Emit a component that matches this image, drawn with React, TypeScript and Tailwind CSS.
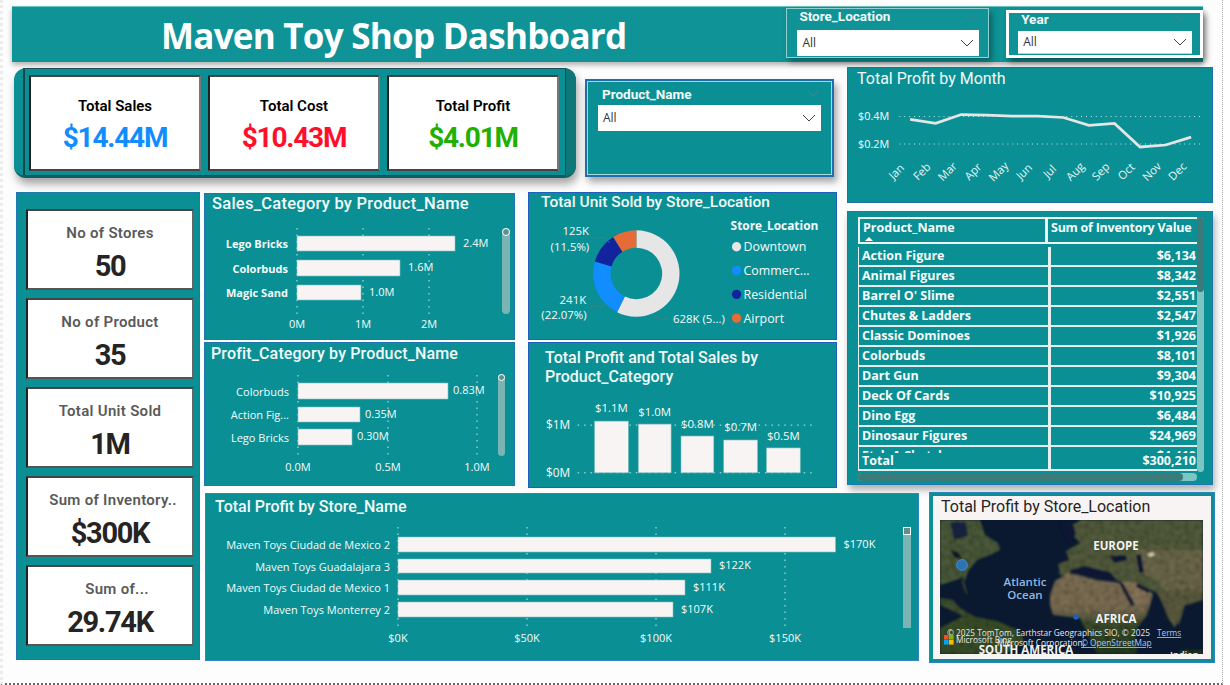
import React from "react";

const din = "font-['Roboto',sans-serif]";
const segoe = "font-['Open_Sans',sans-serif]";

function Chevron({ className }: { className: string }) {
  return (
    <svg viewBox="0 0 14 8" className={className} fill="none" stroke="currentColor" strokeWidth="1">
      <path d="M1 1l6 6 6-6" />
    </svg>
  );
}

function Dropdown({ className }: { className: string }) {
  return (
    <div className={`flex items-center justify-between bg-white pl-[5px] pr-[5px] text-[12px] text-[#333] ${segoe} ${className}`}>
      <span>All</span>
      <Chevron className="w-[14px] h-[8px] text-[#444]" />
    </div>
  );
}

function Kpi({ label, value, color }: { label: string; value: string; color: string }) {
  return (
    <div className="w-[172px] h-[96px] bg-white border-2 border-t-[#444] border-l-[#222] border-r-[#777] border-b-[#444] flex flex-col items-center pt-[19px]">
      <div className={`text-[15px] leading-[20px] font-semibold text-black ${din}`}>{label}</div>
      <div className={`text-[28px] leading-[34px] mt-[5px] font-bold tracking-[-1.2px] ${din} ${color}`}>{value}</div>
    </div>
  );
}

function Stat({ label, value, offset }: { label: string; value: string; offset?: string }) {
  return (
    <div className="w-[168px] h-[81px] bg-white border-2 border-t-[#444] border-l-[#222] border-r-[#666] border-b-[#555] flex flex-col items-center pt-[12px]">
      <div className={`text-[15px] leading-[20px] font-semibold tracking-[0.3px] text-[#5a5a5a] ${din} ${offset ?? ""}`}>{label}</div>
      <div className={`text-[29px] leading-[34px] mt-[6px] font-bold tracking-[-1.3px] text-[#252423] ${din}`}>{value}</div>
    </div>
  );
}

const months = ["Jan", "Feb", "Mar", "Apr", "May", "Jun", "Jul", "Aug", "Sep", "Oct", "Nov", "Dec"];
const profit = [119, 123, 114, 114.5, 115.5, 115.5, 117, 125, 123, 147, 145, 137];
const monthX = (i: number) => 908 + i * 26;

function ProfitByMonth() {
  return (
    <svg viewBox="847 88 366 115" className={`w-[364px] h-[113px] ${segoe}`}>
      <line x1="897" x2="1204" y1="116" y2="116" stroke="#cfe6e6" strokeWidth="1" strokeDasharray="1 4" />
      <line x1="897" x2="1204" y1="144" y2="144" stroke="#cfe6e6" strokeWidth="1" strokeDasharray="1 4" />
      <text x="855" y="120" fontSize="11" fill="#f5fafa">$0.4M</text>
      <text x="855" y="148" fontSize="11" fill="#f5fafa">$0.2M</text>
      <polyline
        points={profit.map((y, i) => `${monthX(i)},${y}`).join(" ")}
        fill="none"
        stroke="#e6e6e6"
        strokeWidth="2.8"
      />
      {months.map((m, i) => (
        <text
          key={m}
          x={monthX(i) - 14}
          y={176}
          fontSize="11.5"
          fill="#e8f4f4"
          textAnchor="middle"
          transform={`rotate(-45 ${monthX(i) - 14} 172)`}
        >
          {m}
        </text>
      ))}
    </svg>
  );
}

type Bar = { label: string; end: number; y: number; h: number; value: string };

function HBars({
  box,
  className,
  bars,
  x0,
  grid,
  gridY,
  ticks,
  tickY,
  labelX,
  bold,
  font,
  valueOff,
}: {
  box: string;
  className: string;
  bars: Bar[];
  x0: number;
  grid: number[];
  gridY: [number, number];
  ticks: string[];
  tickY: number;
  labelX: number;
  bold?: boolean;
  font: number;
  valueOff: number;
}) {
  return (
    <svg viewBox={box} className={className}>
      {grid.map((x) => (
        <line key={x} x1={x} x2={x} y1={gridY[0]} y2={gridY[1]} stroke="#cfe6e6" strokeDasharray="1.5 5" />
      ))}
      {bars.map((b) => (
        <g key={b.label}>
          <rect x={x0} y={b.y} width={b.end - x0} height={b.h} fill="#f9f4f4" stroke="#7fc0c0" strokeWidth="0.6" />
          <text x={labelX} y={b.y + b.h / 2 + 4.5} fontSize={font} textAnchor="end" fill="#f5fafa" fontWeight={bold ? 700 : 400}>
            {b.label}
          </text>
          <text x={b.end + valueOff} y={b.y + b.h / 2 + 3} fontSize={font} fill="#f5fafa">
            {b.value}
          </text>
        </g>
      ))}
      {grid.map((x, i) =>
        ticks[i] ? (
          <text key={x} x={x} y={tickY} fontSize={font} textAnchor="middle" fill="#f5fafa">
            {ticks[i]}
          </text>
        ) : null,
      )}
    </svg>
  );
}

function arc(start: number, end: number) {
  const pt = (a: number, r: number) => {
    const t = ((a - 90) * Math.PI) / 180;
    return `${(636 + r * Math.cos(t)).toFixed(2)} ${(273 + r * Math.sin(t)).toFixed(2)}`;
  };
  const large = end - start > 180 ? 1 : 0;
  return `M${pt(start, 43.5)}A43.5 43.5 0 ${large} 1 ${pt(end, 43.5)}L${pt(end, 26)}A26 26 0 ${large} 0 ${pt(start, 26)}Z`;
}

const legend = [
  { label: "Downtown", color: "#e6e6e6", y: 246 },
  { label: "Commerc...", color: "#118dff", y: 270 },
  { label: "Residential", color: "#12239e", y: 294 },
  { label: "Airport", color: "#e66c37", y: 318 },
];

function UnitDonut() {
  return (
    <svg viewBox="528 211 309 128" className={`w-[307px] h-[127px] ${segoe}`}>
      <path d={arc(0, 206.5)} fill="#e6e6e6" />
      <path d={arc(206.5, 286)} fill="#118dff" />
      <path d={arc(286, 327.5)} fill="#12239e" />
      <path d={arc(327.5, 360)} fill="#e66c37" />
      <g fill="none" stroke="#4d7f80" strokeWidth="0.8">
        <path d="M592 237h12l5 5" />
        <path d="M589 306h12l4-3" />
        <path d="M655 315l4 4h10" />
      </g>
      <g fontSize="11.5" fill="#f5fafa" textAnchor="middle">
        <text x="575" y="234">125K</text>
        <text x="569" y="250">(11.5%)</text>
        <text x="572" y="304">241K</text>
        <text x="563" y="319">(22.07%)</text>
        <text x="699" y="323">628K (5...)</text>
      </g>
      <text x="731" y="229" fontSize="12" fontWeight="700" fill="#f5fafa">Store_Location</text>
      {legend.map((l) => (
        <g key={l.label}>
          <circle cx="737" cy={l.y} r="4.7" fill={l.color} />
          <text x="744" y={l.y + 4.5} fontSize="12.5" fill="#f5fafa">{l.label}</text>
        </g>
      ))}
    </svg>
  );
}

const columns = [
  { x: 594, w: 34, top: 421, value: "$1.1M", vy: 412 },
  { x: 638, w: 33, top: 424, value: "$1.0M", vy: 416 },
  { x: 681, w: 33, top: 436, value: "$0.8M", vy: 428 },
  { x: 724, w: 34, top: 440, value: "$0.7M", vy: 431 },
  { x: 767, w: 34, top: 448, value: "$0.5M", vy: 440 },
];

function CategoryColumns() {
  return (
    <svg viewBox="528 395 309 92" className={`w-[307px] h-[92px] ${segoe}`}>
      <line x1="577" x2="817" y1="425" y2="425" stroke="#cfe6e6" strokeDasharray="1.5 5" />
      <line x1="577" x2="817" y1="473" y2="473" stroke="#cfe6e6" strokeDasharray="1.5 5" />
      <text x="545" y="429" fontSize="12" fill="#f5fafa">$1M</text>
      <text x="545" y="477" fontSize="12" fill="#f5fafa">$0M</text>
      {columns.map((c) => (
        <g key={c.x}>
          <rect x={c.x} y={c.top} width={c.w} height={473 - c.top} fill="#f9f4f4" stroke="#7fc0c0" strokeWidth="0.6" />
          <text x={c.x + c.w / 2} y={c.vy} fontSize="11.5" textAnchor="middle" fill="#f5fafa">{c.value}</text>
        </g>
      ))}
    </svg>
  );
}

const inventory = [
  ["Action Figure", "$6,134"],
  ["Animal Figures", "$8,342"],
  ["Barrel O' Slime", "$2,551"],
  ["Chutes & Ladders", "$2,547"],
  ["Classic Dominoes", "$1,926"],
  ["Colorbuds", "$8,101"],
  ["Dart Gun", "$9,304"],
  ["Deck Of Cards", "$10,925"],
  ["Dino Egg", "$6,484"],
  ["Dinosaur Figures", "$24,969"],
  ["Etch A Sketch", "$4,410"],
];

function InventoryTable() {
  return (
    <div className={`flex ml-[10px] mt-[5px] ${segoe} text-[12.5px] font-bold text-[#f7fcfc]`}>
      <div className="w-[339px]">
        <div className="h-[27px] flex border-2 border-[#eef4f4] border-r-0 bg-[#0a9094]">
          <div className="w-[188px] relative pl-[3px] leading-[17px] border-r-[3px] border-[#eef4f4]">
            Product_Name
            <div className="absolute left-[5px] bottom-[1px] w-0 h-0 border-x-[4px] border-x-transparent border-b-[4px] border-b-white" />
          </div>
          <div className="flex-1 pl-[3px] leading-[17px] whitespace-nowrap tracking-[-0.25px]">Sum of Inventory Value</div>
        </div>
        <div className="h-[206px] overflow-hidden mt-[3px]">
          {inventory.map(([name, value]) => (
            <div key={name} className="h-[20px] flex border-b-[2px] border-[#e8efef] leading-[17px] border-l border-l-[#e8efef]">
              <div className="w-[189px] pl-[3px]">{name}</div>
              <div className="w-[3px] bg-[#e8efef]" />
              <div className="flex-1 text-right pr-[1px]">{value}</div>
            </div>
          ))}
        </div>
        <div className="h-[18px] flex border-b-[2px] border-[#e8efef] leading-[16px] border-l border-l-[#e8efef]">
          <div className="w-[189px] pl-[3px]">Total</div>
          <div className="w-[3px] bg-[#e8efef]" />
          <div className="flex-1 text-right pr-[1px]">$300,210</div>
        </div>
        <div className="h-[8px] mt-[2px] rounded-full bg-[#7dc4c4]">
          <div className="h-full w-[325px] rounded-full bg-[#3b7a7a]" />
        </div>
      </div>
      <div className="w-[7px] h-[255px] rounded-full bg-[#7dc4c4]">
        <div className="w-full h-[75px] rounded-full bg-[#3b7a7a]" />
      </div>
    </div>
  );
}

function WorldMap() {
  return (
    <svg viewBox="0 0 263 134" className={`w-[263px] h-[134px] ml-[7px] mt-[3px] ${segoe}`}>
      <defs>
        <filter id="grain" x="0" y="0" width="100%" height="100%">
          <feTurbulence type="fractalNoise" baseFrequency="0.2" numOctaves="3" seed="4" />
          <feColorMatrix values="0 0 0 0 0  0 0 0 0 0  0 0 0 0 0  0.9 0 0 0 -0.3" />
          <feComposite in2="SourceGraphic" operator="in" result="speck" />
          <feMerge>
            <feMergeNode in="SourceGraphic" />
            <feMergeNode in="speck" />
          </feMerge>
        </filter>
        <filter id="soft">
          <feGaussianBlur stdDeviation="1" />
        </filter>
        <linearGradient id="africa" x1="0" y1="0" x2="0" y2="1">
          <stop offset="0" stopColor="#7d6f55" />
          <stop offset="0.45" stopColor="#7a6c52" />
          <stop offset="0.65" stopColor="#3a4c2c" />
          <stop offset="1" stopColor="#243a22" />
        </linearGradient>
      </defs>
      <rect width="263" height="134" fill="#0a1930" />
      <g filter="url(#soft)">
        <g filter="url(#grain)">
          {/* north america */}
          <path d="M0 0h40l5 15 13 8 2 7-10 5-13 5-9 11-3 10-2-4-10 4-13 4z" fill="#4b5a3a" />
          <path d="M23 57l3 12 2 6-3-3-3-10z" fill="#3e4d33" />
          {/* gulf coast, central america */}
          <path d="M0 78l13 2 7 8 17 10-8 1-12-6-17-8z" fill="#3f5030" />
          <path d="M25 95l32 6 23 10 4 11-19 12H0v-26z" fill="#3a5029" />
          {/* europe and asia */}
          <path d="M120 53l-2-9 11-4-3-9 14-8-13-15 14-8h122v75l-16 3-8 27-9-7-13-25-20-10-14-1-15-4-10-4-22 1-12 2-7-5z" fill="#525c3e" />
          <path d="M196 30h67v45l-16 3-18-4-14-14-19-12z" fill="#6a674c" />
          {/* arabia */}
          <path d="M181 62l15 0 17 12-13 11-8 1z" fill="#86765a" />
          {/* africa */}
          <path d="M110 75l5-14 13-8 29 7 23 3 12 23 21-11-6 20-12 16 2 23h-40l-17-36-27-3-3-10z" fill="url(#africa)" />
          {/* india */}
          <path d="M218 72l32-4 13 4v8l-20 6-8 22-7-10z" fill="#5c5c40" />
          <path d="M240 130h23v4h-23z" fill="#2a3b24" />
        </g>
        {/* inland seas and lakes */}
        <path d="M130 50l15-4 12 3 13 3 7 8-10-1-17-3-20-2z" fill="#0a1930" />
        <path d="M170 36l15-1 3 5-14 3z" fill="#0a1930" />
        <path d="M196 35l5-1 3 18-5 1z" fill="#0a1930" />
        <path d="M179 63l4 0 12 22-4 1z" fill="#0a1930" />
        <path d="M197 63l14 8-3 2-12-6z" fill="#0a1930" />
        <path d="M10 30l8 2 4 7-7-1z" fill="#0a1426" />
        <path d="M10 2l16 0 2 14-14 4z" fill="#12223a" />
        <path d="M120 4l12-4 4 14-6 10-5-6z" fill="#0a1930" />
        <path d="M207 34l6-2 2 3-5 2z" fill="#cfc8a8" />
      </g>
      <circle cx="22" cy="45" r="5.4" fill="#2a78c8" fillOpacity="0.85" stroke="#3f8ad6" />
      <circle cx="136" cy="97" r="2.8" fill="#1c5fc0" />
      <g fontWeight="700" fontSize="11.5" fill="#f2f2f2" textAnchor="middle">
        <text x="176" y="30">EUROPE</text>
        <text x="176" y="103">AFRICA</text>
        <text x="86" y="134">SOUTH AMERICA</text>
      </g>
      <g fontWeight="600" fontSize="11.5" fill="#8fb8e0" textAnchor="middle">
        <text x="85" y="66">Atlantic</text>
        <text x="85" y="79">Ocean</text>
      </g>
      <text x="230" y="138" fontSize="9" fontWeight="700" fill="#ddd">Indian</text>
      <g fontSize="8.3" fill="#e8e8e8">
        <text x="7" y="116">© 2025 TomTom, Earthstar Geographics SIO, © 2025</text>
        <text x="16" y="123">Microsoft Bing</text>
        <text x="57" y="126">Microsoft Corporation,</text>
      </g>
      <text x="141" y="126" fontSize="8.3" fill="#a9c7ff" textDecoration="underline">© OpenStreetMap</text>
      <text x="217" y="116" fontSize="8.3" fill="#a9c7ff" textDecoration="underline">Terms</text>
      <rect x="4" y="115" width="4.6" height="4.6" fill="#f25022" />
      <rect x="9" y="115" width="4.6" height="4.6" fill="#7fba00" />
      <rect x="4" y="120" width="4.6" height="4.6" fill="#00a4ef" />
      <rect x="9" y="120" width="4.6" height="4.6" fill="#ffb900" />
    </svg>
  );
}

function ScrollBar({ className, thumb }: { className: string; thumb: string }) {
  return (
    <div className={`absolute rounded-full bg-[#79b5b5] ${className}`}>
      <div className={`border border-white bg-[#5f8f8f] ${thumb}`} />
    </div>
  );
}

export default function App() {
  return (
    <div className="w-[1223px] h-[685px] bg-[#fdfdfd] border-l-[3px] border-l-[#ececec] border-r-[1px] border-r-[#a8a8a8] border-b-2 border-b-[#666] border-dotted overflow-hidden pt-[6px]">
      {/* header band */}
      <div className="ml-[9px] w-[1191px] h-[56px] flex items-start bg-[#0f9397] border-t border-t-[#6fc0c0] shadow-[0_3px_5px_rgba(0,0,0,0.3)]">
        <h1 className={`w-[775px] pl-[149px] text-[35px] leading-[58px] font-bold tracking-[-0.75px] text-white whitespace-nowrap ${segoe}`}>
          Maven Toy Shop Dashboard
        </h1>
        <div className="relative w-[203px] h-[50px] mt-[1px] border border-[#8fd0d0] bg-[#0f9397] shadow-[3px_4px_6px_rgba(0,0,0,0.35)]">
          <div className={`pl-[12px] text-[13.5px] leading-[15px] font-bold text-[#f2fafa] ${din}`}>Store_Location</div>
          <Chevron className="absolute right-[13px] top-[5px] w-[12px] h-[7px] text-[#4d8386]" />
          <Dropdown className="ml-[10px] mr-[9px] h-[26px] mt-[6px]" />
        </div>
        <div className="relative w-[197px] h-[48px] mt-[3px] ml-[17px] border-[3px] border-white bg-[#0f9397] shadow-[3px_4px_6px_rgba(0,0,0,0.45)]">
          <div className={`pl-[12px] text-[13.5px] leading-[12px] font-bold text-[#f2fafa] ${din}`}>Year</div>
          <Chevron className="absolute right-[13px] top-[2px] w-[12px] h-[7px] text-[#4d8386]" />
          <Dropdown className="ml-[9px] mr-[8px] h-[23px] mt-[6px] border-b border-[#a8dcdc]" />
        </div>
      </div>

      {/* kpi row */}
      <div className="flex items-start h-[125px] mt-[5px] ml-[11px]">
        <div className="mt-[1px] w-[562px] h-[110px] flex rounded-xl overflow-hidden bg-[#0a9094] border-b-2 border-b-[#0b5f62] shadow-[2px_6px_8px_rgba(0,0,0,0.35)]">
          <div className="ml-[9px] w-[543px] border border-[#1d4f52] border-l-2 border-l-[#15484a] flex gap-[7px] pl-[4px] pt-[6px]">
            <Kpi label="Total Sales" value="$14.44M" color="text-[#118dff]" />
            <Kpi label="Total Cost" value="$10.43M" color="text-[#ff0f2b]" />
            <Kpi label="Total Profit" value="$4.01M" color="text-[#1fb000]" />
          </div>
          <div className="flex-1 bg-[#0f767a]" />
        </div>
        <div className="relative ml-[9px] mt-[12px] w-[249px] h-[98px] bg-[#0a9094] border-2 border-[#1f6fb0] shadow-[3px_5px_7px_rgba(0,0,0,0.35)]">
          <div className="h-full border border-[#a5dada] pl-[10px] pr-[10px]">
            <div className={`pl-[4px] pt-[3px] text-[13.5px] leading-[18px] font-bold text-[#f2fafa] ${din}`}>Product_Name</div>
            <Chevron className="absolute right-[13px] top-[9px] w-[12px] h-[7px] text-[#4d8386]" />
            <Dropdown className="h-[26px] mt-[2px] pr-[4px]" />
          </div>
        </div>
        <div className="ml-[13px] w-[366px] h-[136px] bg-[#0a9094] border border-[#1f6fb0]">
          <div className={`pl-[9px] pt-[1px] text-[16px] leading-[20px] h-[21px] text-[#f2fafa] ${din}`}>Total Profit by Month</div>
          <ProfitByMonth />
        </div>
      </div>

      {/* lower area */}
      <div className="flex ml-[13px]">
        <div className="w-[184px] h-[468px] bg-[#0a9094] border border-[#1f78b4] pt-[16px] pl-[9px] flex flex-col gap-[8px]">
          <Stat label="No of Stores" value="50" />
          <Stat label="No of Product" value="35" />
          <Stat label="Total Unit Sold" value="1M" />
          <Stat label="Sum of Inventory.." value="$300K" offset="ml-[6px]" />
          <Stat label="Sum of..." value="29.74K" offset="ml-[14px]" />
        </div>

        <div className="ml-[4px] flex flex-col">
          <div className="flex h-[296px] items-start">
            <div className="mt-[1px] w-[311px]">
              <div className="relative h-[147px] bg-[#0a9094] border border-[#1f78b4]">
                <div className={`pl-[7px] text-[16.5px] leading-[20px] h-[25px] tracking-[0.25px] text-[#f2fafa] font-medium ${din}`}>Sales_Category by Product_Name</div>
                <HBars
                  box="205 218 309 121"
                  className={`w-[309px] h-[121px] ${segoe}`}
                  x0={297}
                  grid={[297, 363, 429]}
                  gridY={[227, 316]}
                  ticks={["0M", "1M", "2M"]}
                  tickY={327}
                  labelX={288}
                  bold
                  font={11}
                  valueOff={8}
                  bars={[
                    { label: "Lego Bricks", end: 455, y: 235, h: 15, value: "2.4M" },
                    { label: "Colorbuds", end: 400, y: 259, h: 16, value: "1.6M" },
                    { label: "Magic Sand", end: 361, y: 284, h: 15, value: "1.0M" },
                  ]}
                />
                <ScrollBar className="left-[297px] top-[34px] w-[8px] h-[86px]" thumb="w-[8px] h-[8px] rounded-full" />
              </div>
              <div className="relative mt-[2px] h-[144px] bg-[#0a9094] border border-[#1f78b4]">
                <div className={`pl-[6px] text-[16px] leading-[22px] h-[25px] tracking-[0.15px] text-[#f2fafa] font-medium ${din}`}>Profit_Category by Product_Name</div>
                <HBars
                  box="205 368 309 117"
                  className={`w-[309px] h-[117px] ${segoe}`}
                  x0={298}
                  grid={[298, 388, 477]}
                  gridY={[375, 459]}
                  ticks={["0.0M", "0.5M", "1.0M"]}
                  tickY={471}
                  labelX={289}
                  font={11}
                  valueOff={5}
                  bars={[
                    { label: "Colorbuds", end: 448, y: 383, h: 16, value: "0.83M" },
                    { label: "Action Fig...", end: 360, y: 407, h: 15, value: "0.35M" },
                    { label: "Lego Bricks", end: 352, y: 429, h: 16, value: "0.30M" },
                  ]}
                />
                <ScrollBar className="left-[293px] top-[31px] w-[7px] h-[82px]" thumb="w-[7px] h-[7px] rounded-full" />
              </div>
            </div>

            <div className="ml-[13px] w-[309px]">
              <div className="h-[148px] bg-[#0a9094] border border-[#1f5fc0]">
                <div className={`pl-[12px] text-[15.5px] leading-[18px] h-[19px] text-[#f2fafa] font-medium ${din}`}>Total Unit Sold by Store_Location</div>
                <UnitDonut />
              </div>
              <div className="mt-[2px] h-[146px] bg-[#0a9094] border border-[#1f5fc0]">
                <div className={`pl-[16px] pt-[5px] text-[16px] leading-[19px] h-[52px] text-[#f2fafa] font-medium ${din}`}>
                  Total Profit and Total Sales by
                  <br />
                  Product_Category
                </div>
                <CategoryColumns />
              </div>
            </div>

            <div className="ml-[10px] mt-[19px] w-[366px] h-[274px] bg-[#0a9094] border border-[#1f78b4] shadow-[2px_5px_7px_rgba(0,0,0,0.3)]">
              <InventoryTable />
            </div>
          </div>

          <div className="flex mt-[5px] ml-[1px]">
            <div className="relative w-[714px] h-[168px] bg-[#0a9094] border border-[#2f86bd]">
              <div className={`pl-[9px] pt-[3px] text-[16px] leading-[20px] h-[26px] text-[#f2fafa] font-medium ${din}`}>Total Profit by Store_Name</div>
              <HBars
                box="206 520 712 140"
                className={`w-[712px] h-[140px] ${segoe}`}
                x0={398}
                grid={[398, 527, 656, 785]}
                gridY={[527, 630]}
                ticks={["$0K", "$50K", "$100K", "$150K"]}
                tickY={642}
                labelX={390}
                font={11}
                valueOff={8}
                bars={[
                  { label: "Maven Toys Ciudad de Mexico 2", end: 835.5, y: 537, h: 15, value: "$170K" },
                  { label: "Maven Toys Guadalajara 3", end: 711, y: 559, h: 14, value: "$122K" },
                  { label: "Maven Toys Ciudad de Mexico 1", end: 685, y: 580, h: 15, value: "$111K" },
                  { label: "Maven Toys Monterrey 2", end: 673, y: 602, h: 15, value: "$107K" },
                ]}
              />
              <ScrollBar className="left-[697px] top-[33px] w-[8px] h-[101px] !rounded-none" thumb="w-[8px] h-[8px]" />
            </div>
            <div className="ml-[11px] w-[284px] h-[169px] bg-[#f9f4f4] border-[3px] border-[#0a9094] outline outline-1 outline-[#2f86bd]">
              <div className={`pl-[8px] text-[16px] leading-[22px] h-[21px] text-[#252423] ${din}`}>Total Profit by Store_Location</div>
              <WorldMap />
            </div>
          </div>
        </div>
      </div>
    </div>
  );
}
